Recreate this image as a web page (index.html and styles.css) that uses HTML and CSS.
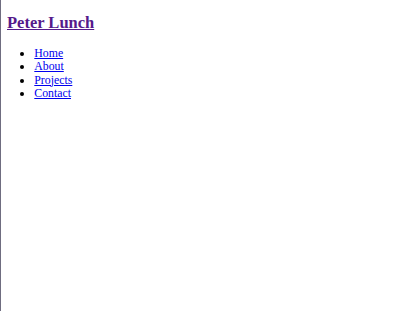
FILE: index.html
```html
<!DOCTYPE html>
<html lang="en">
<head>
<meta charset="utf-8">
<title>Peter Lunch</title>
<link rel="stylesheet" href="styles.css">
</head>
<body>
<header class="site">
  <h1 class="title"><a class="title-link" href="#">Peter Lunch</a></h1>
  <ul class="nav">
    <li><a class="nav-link" href="#home">Home</a></li>
    <li><a class="nav-link" href="#about">About</a></li>
    <li><a class="nav-link" href="#projects">Projects</a></li>
    <li><a class="nav-link" href="#contact">Contact</a></li>
  </ul>
</header>
</body>
</html>
```
FILE: styles.css
```css
html {
  height: 100%;
  border-left: 1px solid #6f6d80;
  box-sizing: border-box;
  background: #fff;
}
body {
  margin: 0 0 0 6px;
  padding-top: 0.1px;
  font-family: "Liberation Serif", "Times New Roman", serif;
  font-size: 11.8px;
  color: #000;
}
.title {
  margin: 12.5px 0 15.4px;
  font-size: 16.5px;
  font-weight: bold;
  line-height: 19px;
}
.title-link {
  color: #551a8b;
}
.nav {
  margin: 0;
  padding-left: 27.3px;
  list-style: disc;
  line-height: 13.3px;
}
.nav-link {
  color: #0000ee;
}
```
